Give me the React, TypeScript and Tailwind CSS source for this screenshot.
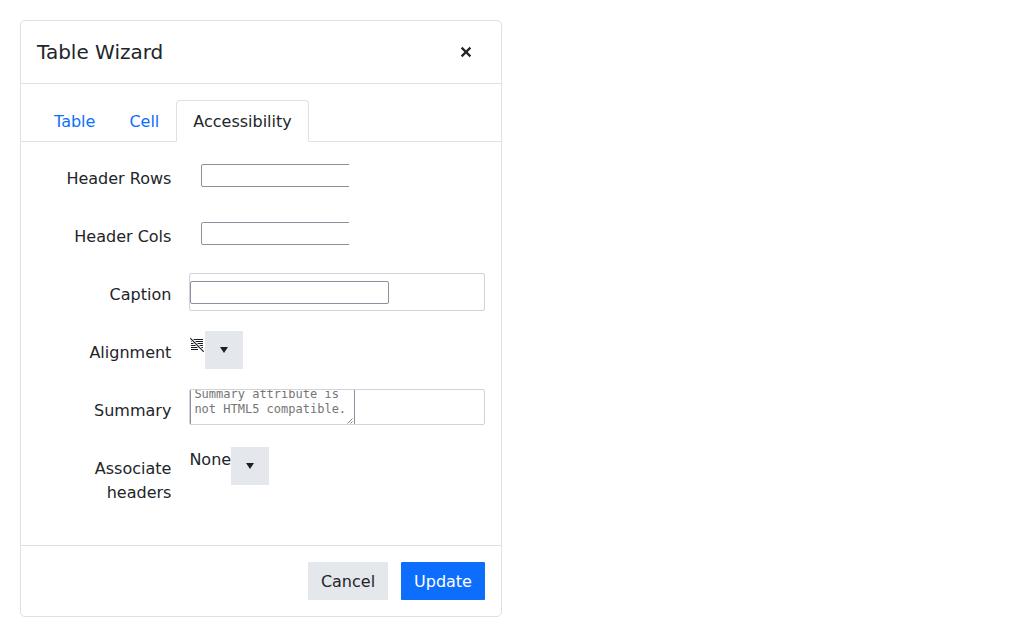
import type { ReactNode } from 'react';

function Row({ label, children }: { label: string; children?: ReactNode }) {
  return (
    <div className="flex h-[58px] items-start">
      <label className="w-[134.4px] shrink-0 pt-[10px] text-right">{label}</label>
      <div className="ml-[17.6px] flex w-[296px] items-start">{children}</div>
    </div>
  );
}

function MenuButton() {
  return (
    <button className="flex h-[38px] w-[38px] items-center justify-center bg-[#e4e7eb]" aria-label="Open menu">
      <svg width="8" height="6" viewBox="0 0 8 6" className="block">
        <path d="M0 0H8L4 6Z" fill="#1d2125" />
      </svg>
    </button>
  );
}

function SpinInput() {
  return (
    <div className="mt-[7px] ml-3 h-[23px] w-[148px] overflow-hidden">
      <input className="block h-[23px] w-[200px] rounded-[2px] border border-[#8f8f9d] bg-white outline-none" />
    </div>
  );
}

function AlignIcon() {
  return (
    <svg width="14" height="14" viewBox="0 0 14 14" className="mt-[7px] ml-px block" fill="none">
      <path d="M1 1.5H13M1 3.5H13M1 5.5H13M1 7.5H13M1 9.5H13M1 11.5H8" stroke="#1d1d24" strokeWidth="1" />
      <path d="M0 0L14 14" stroke="#fff" strokeWidth="3" />
      <path d="M0.3 0.3L13.7 13.7" stroke="#1d1d24" strokeWidth="1.2" />
    </svg>
  );
}

const tabs = ['Table', 'Cell', 'Accessibility'];

export default function App() {
  return (
    <div className="p-5 font-['DejaVu_Sans',sans-serif] text-base leading-6 text-[#212529]">
      <section className="h-[597px] w-[482px] rounded-[5px] border border-[#dee0e4] bg-white">
        <header className="flex h-[63px] items-center justify-between border-b border-[#dee0e4] pr-[29px] pl-4">
          <h1 className="text-xl leading-[30px]">Table Wizard</h1>
          <button aria-label="Close" className="flex h-3 w-3 items-center justify-center">
            <svg width="12" height="12" viewBox="0 0 12 12" className="block">
              <path d="M1.6 1.6L10.4 10.4M10.4 1.6L1.6 10.4" stroke="#212529" strokeWidth="2.2" />
            </svg>
          </button>
        </header>
        <nav className="mt-4 flex h-[42px] border-b border-[#dee2e6] pl-4">
          {tabs.map((tab) => (
            <button
              key={tab}
              className={
                tab === 'Accessibility'
                  ? 'h-[42px] rounded-t-[4px] border border-[#dee2e6] border-b-white bg-white px-4 pt-px'
                  : 'h-[42px] border border-transparent px-4 pt-px text-[#0d6efd]'
              }
            >
              {tab}
            </button>
          ))}
        </nav>
        <div className="h-[403px] pt-[15px] pl-4">
          <Row label="Header Rows">
            <SpinInput />
          </Row>
          <Row label="Header Cols">
            <SpinInput />
          </Row>
          <Row label="Caption">
            <div className="h-[38px] w-[296px] rounded-[2px] border border-[#ced4da] pt-[7px]">
              <input className="block h-[23px] w-[199px] rounded-[2px] border border-[#8f8f9d] bg-white outline-none" />
            </div>
          </Row>
          <Row label="Alignment">
            <AlignIcon />
            <span className="ml-px">
              <MenuButton />
            </span>
          </Row>
          <Row label="Summary">
            <div className="h-9 w-[296px] overflow-hidden rounded-[2px] border border-[#ced4da]">
              <div className="relative -mt-1 h-[40px] w-[165px] overflow-hidden rounded-[2px] border border-[#8f8f9d] pl-[3.4px] font-['DejaVu_Sans_Mono',monospace] text-xs leading-[15px] whitespace-pre text-[#757575]">
                {'Summary attribute is\nnot HTML5 compatible.'}
                <svg width="6" height="6" viewBox="0 0 6 6" className="absolute right-px bottom-px">
                  <path d="M0.5 5.5L5.5 0.5M3.5 5.5L5.5 3.5" stroke="#777" strokeWidth="0.9" />
                </svg>
              </div>
            </div>
          </Row>
          <Row label="Associate headers">
            <span className="w-[42px] pt-px pl-[0.4px]">None</span>
            <MenuButton />
          </Row>
        </div>
        <footer className="flex h-[72px] justify-end gap-[13px] border-t border-[#dee0e4] pt-4 pr-4">
          <button className="h-[38px] w-20 rounded-[1px] bg-[#e4e7eb] pt-0.5">Cancel</button>
          <button className="h-[38px] w-[84px] rounded-[1px] bg-[#0d6efd] pt-0.5 text-white">Update</button>
        </footer>
      </section>
    </div>
  );
}
